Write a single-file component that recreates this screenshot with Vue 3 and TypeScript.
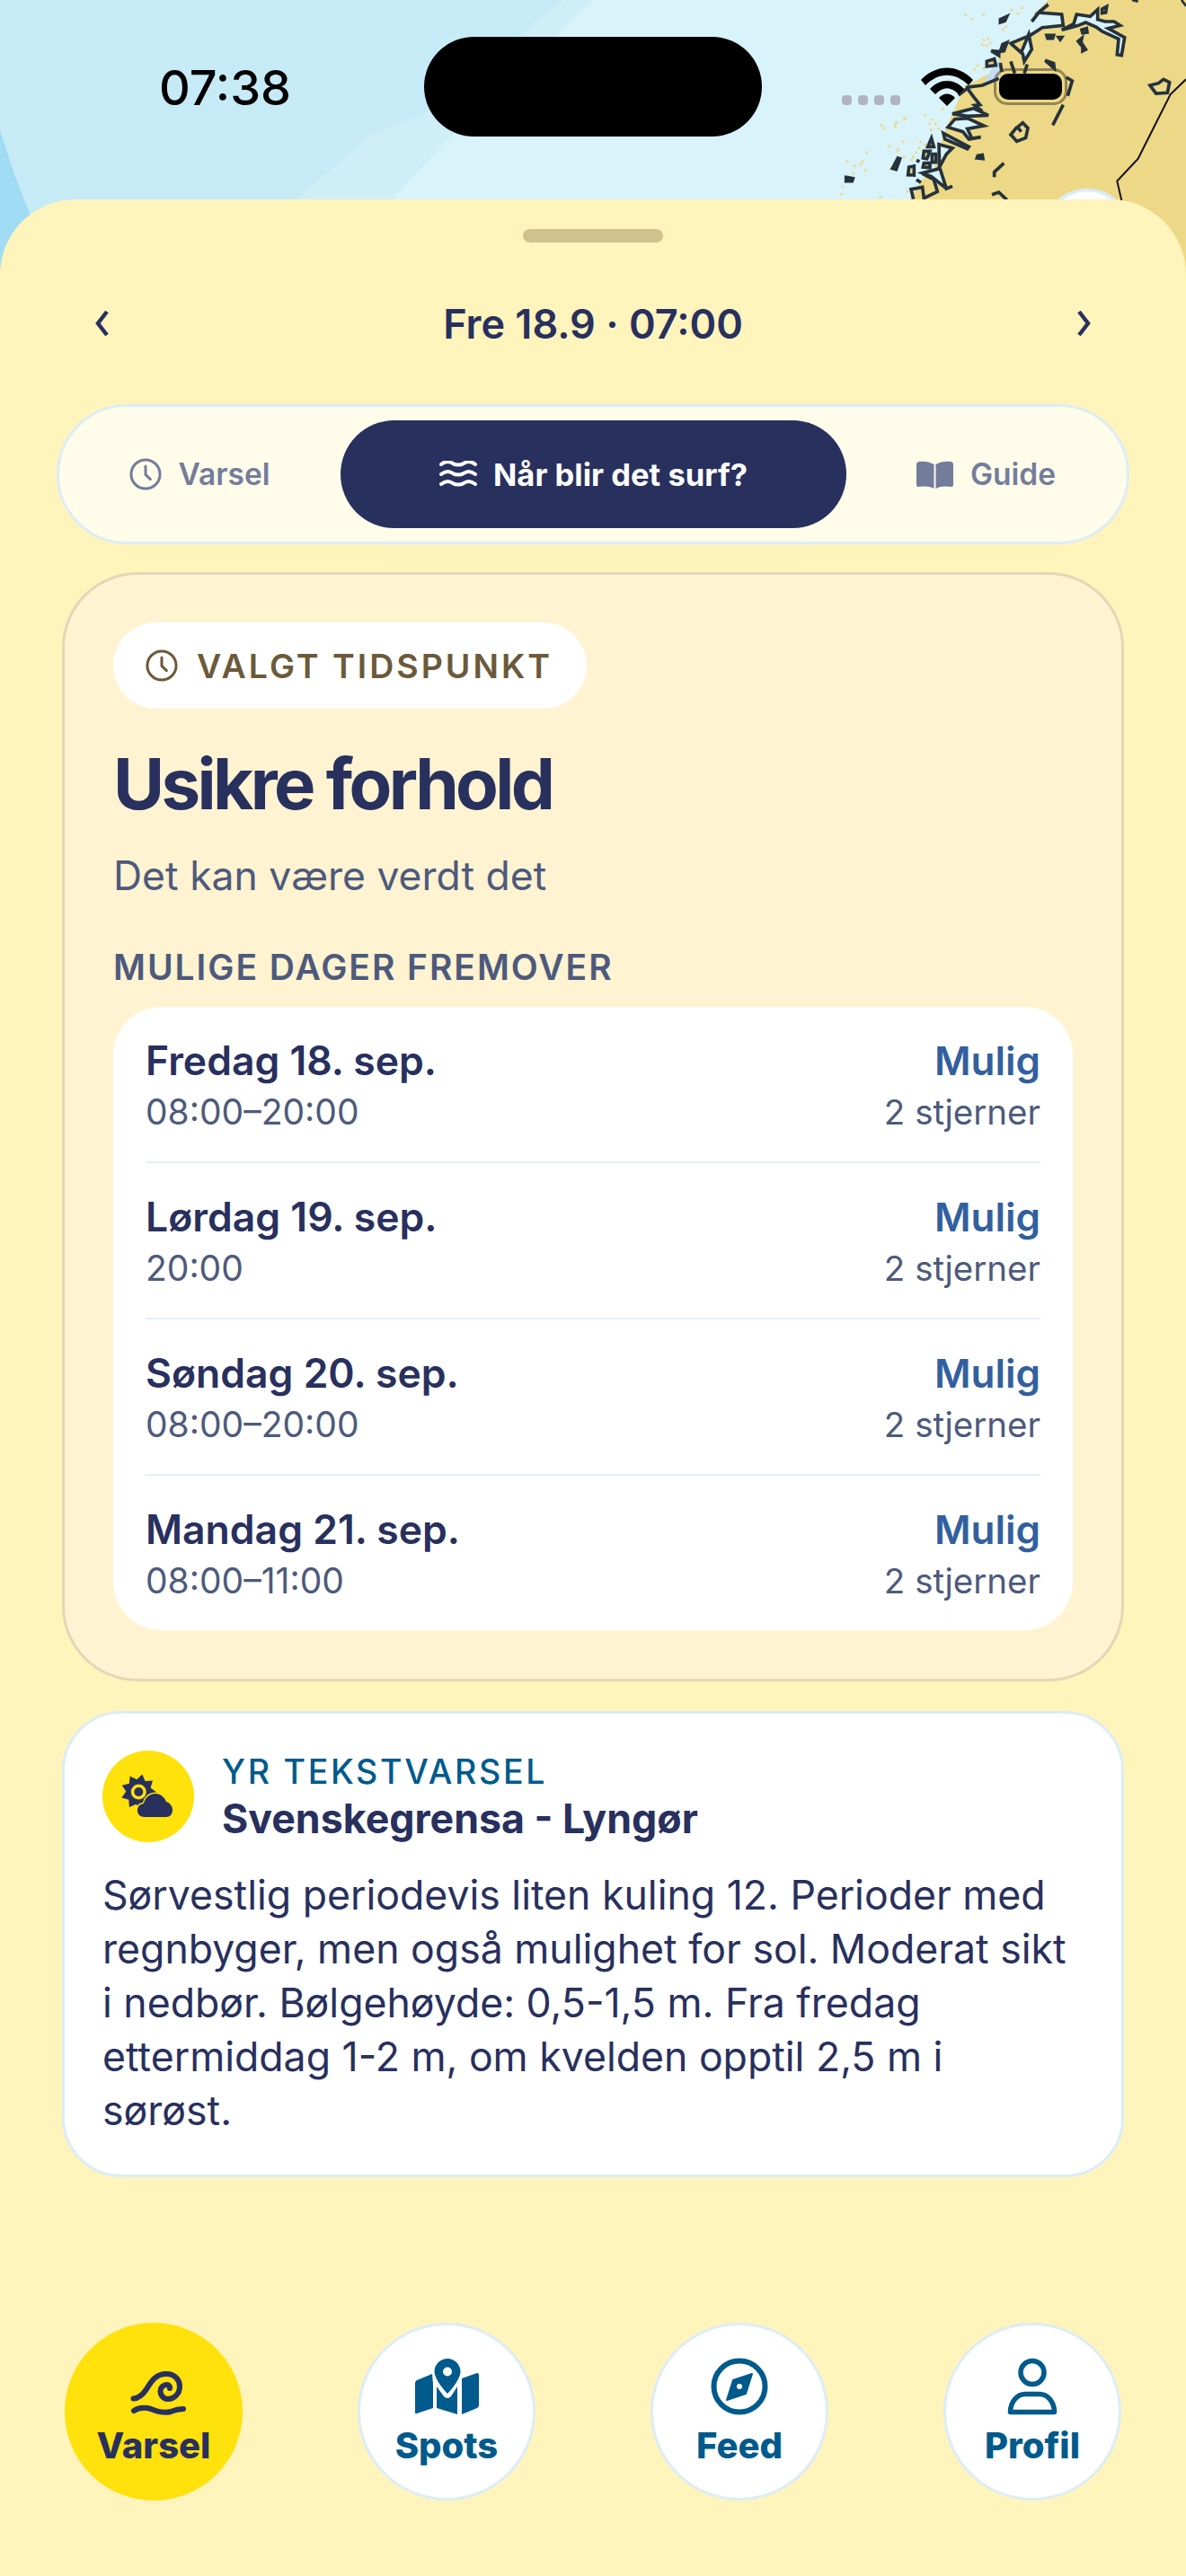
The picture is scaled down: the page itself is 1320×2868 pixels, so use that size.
<script setup lang="ts">
interface DayRow { day: string; hours: string }
const days: DayRow[] = [
  { day: 'Fredag 18. sep.', hours: '08:00–20:00' },
  { day: 'Lørdag 19. sep.', hours: '20:00' },
  { day: 'Søndag 20. sep.', hours: '08:00–20:00' },
  { day: 'Mandag 21. sep.', hours: '08:00–11:00' },
]

const sunPoints = (() => {
  const pts: string[] = []
  for (let i = 0; i < 18; i++) {
    const r = i % 2 === 0 ? 20 : 14
    const a = (i / 18) * Math.PI * 2 - Math.PI / 2 + 0.2
    pts.push(`${(40.3 + r * Math.cos(a)).toFixed(1)},${(46 + r * Math.sin(a)).toFixed(1)}`)
  }
  return pts.join(' ')
})()

const specks: [number, number][] = [
  [640,45],[580,45],[735,30],[755,42],[705,95],[715,85],[640,130],[655,125],[662,140],[650,148],[635,145],
  [620,215],[640,225],[610,228],[600,60],[768,22],[300,415],[310,425],[345,420],[350,405],[375,395],[380,390],
  [445,380],[470,395],[480,410],[465,430],[490,425],[430,470],[445,480],[425,490],[325,485],[355,495],[375,520],
  [400,530],[235,535],[245,565],[210,550],[185,535],[170,620],[165,645],[295,655],[330,560],[405,520],[415,505],
  [385,635],[505,360],[560,340],[250,505],[372,470],[345,410],[460,410],[440,500],[205,575],[230,545],[352,500],
]
</script>

<template>
  <div class="phone">
    <svg class="map" width="1320" height="330" viewBox="0 0 1320 330">
      <rect width="1320" height="330" fill="#c6ebf7" />
      <path d="M0 145 L17 197 L34 240 L60 330 L0 330Z" fill="#a0dcf3" />
      <path d="M627 0 L581 37 L477 125 L413 150 L330 222 L300 330 L1320 330 L1320 0Z" fill="#d0eef8" />
      <path d="M661 0 L627 33 L497 157 L437 222 L400 330 L1320 330 L1320 0Z" fill="#d9f3fb" />
      <svg x="880" y="0" width="440" height="330" viewBox="0 0 1320 990">
        <path d="M860 0 L815 45 L800 75 L770 125 L730 140 L700 150 L690 230 L580 290 L540 380 L510 450 L480 560 L440 600 L400 660 L380 990 L1320 990 L1320 0Z" fill="#ecd886" />
        <g fill="#ecd886"><rect v-for="(s, i) in specks" :key="i" :x="s[0]" :y="s[1]" width="8" height="8" /></g>
        <path d="M640 285 L680 215 L700 200 L695 262Z" fill="#c5dff0" />
        <g fill="#d9f3fb" stroke="#25323b" stroke-width="11" stroke-linejoin="miter">
          <path d="M905 100 L945 80 L955 48 L1000 55 L1025 32 L1025 65 L1050 72 L1080 72 L1100 85 L1060 95 L1115 125 L1105 185 L1090 182 L1095 130 L1040 105 L1020 90 L985 75 L960 85 L935 92Z" />
          <path d="M805 72 L830 40 L860 15 L828 42 L905 48 L910 85 L840 92 L800 118 L770 130 L735 145 L770 175 L795 115 L805 165 L780 205 L775 180 L735 145" />
          <path d="M540 380 L610 362 L660 385 L590 388Z" />
          <path d="M525 425 L548 398 L590 395 L645 420 L590 430 L605 462 L635 458 L595 465 L575 440Z" />
          <path d="M510 445 L595 490 L590 497 L515 465Z" />
          <path d="M560 318 L590 295 L612 325 L632 350 L615 352 L640 372" fill="none" />
          <path d="M495 482 L540 495 L520 515 L497 558 L520 630 L540 622 L520 630 L470 590 L440 578 L490 565 L497 558Z" />
          <path d="M440 580 L478 600 L490 640 L445 662 L440 625 L402 632 L410 665" fill="none" />
          <path d="M585 292 L640 285 L695 262" fill="none" />
        </g>
        <g fill="#ecd886" stroke="#25323b" stroke-width="11" stroke-linejoin="miter">
          <path d="M1200 285 L1228 278 L1245 265 L1265 275 L1258 310 L1220 312Z" />
          <path d="M770 440 L757 425 L775 410 L792 428 L785 460 L755 472 L735 450 L755 425" fill="none" />
          <path d="M470 462 L458 490 L478 490Z" />
          <path d="M445 505 L465 505 L455 530 L442 528Z" />
          <path d="M472 515 L485 515 L485 542 L472 542Z" />
          <path d="M358 528 L340 562 L352 566 L365 530Z" />
          <path d="M395 558 L412 555 L412 585 L392 584Z" />
          <path d="M445 545 L465 545 L465 560 L442 558Z" />
          <path d="M655 205 L680 197 L685 218 L655 222Z" />
          <path d="M700 172 L708 148 L722 142 L712 170Z" />
          <path d="M670 170 L695 172 L695 185Z" />
          <path d="M850 202 L878 212 L880 228Z" />
          <path d="M700 65 L722 55 L715 70 L700 75Z" />
          <path d="M855 118 L878 118 L875 128 L858 128Z" />
          <path d="M1040 30 L1055 22 L1052 42 L1040 44Z" />
          <path d="M185 592 L208 596 L205 605 L185 605Z" />
          <path d="M625 520 L640 518 L642 530 L622 528Z" />
          <path d="M972 128 L960 138 L968 148Z" />
          <path d="M975 150 L985 165 L975 170Z" />
          <path d="M972 100 L988 95 L990 108 L975 110Z" />
          <path d="M895 125 L905 125 L900 132Z" />
        </g>
        <g fill="none" stroke="#25323b" stroke-width="11">
          <path d="M700 210 L705 240" />
          <path d="M735 205 L748 245" />
          <path d="M790 215 L780 245" />
          <path d="M712 545 L680 575 L680 592" />
          <path d="M672 650 L695 642 L722 668" />
          <path d="M875 418 L910 350" />
          <path d="M920 258 L940 270 L925 320" />
          <path d="M420 535 L430 540 M420 600 L435 610" />
        </g>
        <path d="M1320 265 L1268 315 L1160 530 L1090 605 L1105 670 L1110 700" fill="none" stroke="#111" stroke-width="6" />
        <path d="M1140 0 L1160 5 M1305 0 L1320 20" fill="none" stroke="#25323b" stroke-width="8" />
        <ellipse cx="990" cy="720" rx="122" ry="90" fill="#d9edf6" />
        <ellipse cx="990" cy="725" rx="110" ry="85" fill="#fff" />
      </svg>
    </svg>

    <div class="status">
      <span class="clock">07:38</span>
      <div class="island"></div>
      <div class="signal"><i></i><i></i><i></i><i></i></div>
      <svg class="wifi" width="58" height="44" viewBox="0 0 58 44">
        <path d="M0 14 C17 -4 41 -4 58 14 L53 20 C38 5 20 5 5 20Z" />
        <path d="M10 24 C21 12 37 12 48 24 L42 30 C33 21 25 21 16 30Z" />
        <path d="M20 34 C25 28 33 28 38 34 L29 43Z" />
      </svg>
      <div class="battery"><div class="battery-fill"></div></div>
    </div>

    <main class="sheet">
      <div class="handle"></div>

      <nav class="date-nav">
        <svg width="24" height="36" viewBox="0 0 24 36"><path d="M17 5 L7 18 L17 31" /></svg>
        <span class="date-label">Fre 18.9 · 07:00</span>
        <svg width="24" height="36" viewBox="0 0 24 36"><path d="M7 5 L17 18 L7 31" /></svg>
      </nav>

      <div class="tabs">
        <div class="tab tab-varsel">
          <svg width="36" height="36" viewBox="0 0 24 24" class="line-icon"><circle cx="12" cy="12" r="10.700" /><path d="M12 6v6.300l3.600 3.400" /></svg>
          <span>Varsel</span>
        </div>
        <div class="tab tab-active">
          <svg width="42" height="30" viewBox="0 0 42 30" class="waves">
            <path d="M2 4 C7 0 11 0 15 3 C18 5 24 5 27 3 C31 0 35 0 40 4" />
            <path d="M2 15 C7 11 11 11 15 14 C18 16 24 16 27 14 C31 11 35 11 40 15" />
            <path d="M2 26 C7 22 11 22 15 25 C18 27 24 27 27 25 C31 22 35 22 40 26" />
          </svg>
          <span>Når blir det surf?</span>
        </div>
        <div class="tab tab-guide">
          <svg width="41" height="31" viewBox="0 0 41 31" class="book">
            <path d="M19.500 4 C15 1 8 0 2.500 1 Q0 1.500 0 4 L0 27 Q0 29 2 29 C8 28 15 28 19.500 31Z" />
            <path d="M21.500 4 C26 1 33 0 38.500 1 Q41 1.500 41 4 L41 27 Q41 29 39 29 C33 28 26 28 21.500 31Z" />
          </svg>
          <span>Guide</span>
        </div>
      </div>

      <section class="card-main">
        <div class="chip">
          <svg width="36" height="36" viewBox="0 0 24 24" class="line-icon chip-icon"><circle cx="12" cy="12" r="10.700" /><path d="M12 6v6.300l3.600 3.400" /></svg>
          <span>VALGT TIDSPUNKT</span>
        </div>
        <h1>Usikre forhold</h1>
        <p class="sub">Det kan være verdt det</p>
        <h2>MULIGE DAGER FREMOVER</h2>
        <ul class="days">
          <li v-for="d in days" :key="d.day" class="day">
            <div class="col">
              <strong>{{ d.day }}</strong>
              <span>{{ d.hours }}</span>
            </div>
            <div class="col col-right">
              <strong class="mulig">Mulig</strong>
              <span>2 stjerner</span>
            </div>
          </li>
        </ul>
      </section>

      <section class="card-yr">
        <header class="yr-head">
          <div class="yr-icon">
            <svg width="102" height="102" viewBox="0 0 102 102">
              <polygon :points="sunPoints" fill="#28305e" />
              <circle cx="40.300" cy="46" r="8.500" fill="#ffe10c" />
              <circle cx="40.300" cy="46" r="5" fill="#28305e" />
              <path d="M47 74 C42 74 39 71 39 66.500 C39 62 42 59.500 46 59 C47 54 51 48 59 48 C65 48 69 52 71 57 C75 58 78 62 78 66 C78 71 75 74 71 74Z" fill="#28305e" stroke="#ffe10c" stroke-width="3" paint-order="stroke" />
            </svg>
          </div>
          <div class="yr-titles">
            <span class="yr-label">YR TEKSTVARSEL</span>
            <strong class="yr-name">Svenskegrensa - Lyngør</strong>
          </div>
        </header>
        <p class="yr-body">Sørvestlig periodevis liten kuling 12. Perioder med regnbyger, men også mulighet for sol. Moderat sikt i nedbør. Bølgehøyde: 0,5-1,5 m. Fra fredag ettermiddag 1-2 m, om kvelden opptil 2,5 m i sørøst.</p>
      </section>

      <footer class="bottom-nav">
        <div class="nav-btn nav-active">
          <svg width="72" height="66" viewBox="0 0 72 66" class="wave-icon">
            <path d="M13.500 46.500 C20 46 24 42 28 36 C33 28 38 19 50 19 C60 19 65 26 65 33 C65 41 59 47 52 47 C47 47 43.500 43 43.500 38 C43.500 34 47 31 50.500 31 C53 31 54.500 33 54 35" />
            <path d="M14 60 C20 56 26 56 33 58 C42 62 48 63 55 61 C60 59 64 58 69 58" />
          </svg>
          <span>Varsel</span>
        </div>
        <div class="nav-btn">
          <svg width="72" height="66" viewBox="0 0 72 66" class="fill-icon">
            <path fill-rule="evenodd" d="M37 2 C45 2 51.500 8.500 51.500 16.500 C51.500 24 42 36 37 41 C32 36 22.500 24 22.500 16.500 C22.500 8.500 29 2 37 2Z M37 11.500 A5 5 0 1 0 37 21.500 A5 5 0 1 0 37 11.500Z" />
            <path d="M20 19 L3 26 Q1 27 1 29 L1 62 Q1 64 3 63 L21 57 L21 31Z" />
            <path d="M25 33 L33 44 Q37 48 41 44 L48 33 L48 64 L25 57Z" />
            <path d="M53 24 L70 18 Q72 18 72 20 L72 54 Q72 56 70 57 L53 64Z" />
          </svg>
          <span>Spots</span>
        </div>
        <div class="nav-btn">
          <svg width="72" height="66" viewBox="0 0 72 66" class="fill-icon">
            <circle cx="36" cy="33" r="28.500" fill="none" stroke="#005a8c" stroke-width="6" />
            <path fill-rule="evenodd" stroke="#005a8c" stroke-width="2" stroke-linejoin="round" d="M50 19 L43 41 L22 48 L29 26Z M36 29 A4 4 0 1 0 36 37 A4 4 0 1 0 36 29Z" />
          </svg>
          <span>Feed</span>
        </div>
        <div class="nav-btn">
          <svg width="72" height="66" viewBox="0 0 72 66" class="person-icon">
            <circle cx="36" cy="17.500" r="13" />
            <path d="M11.500 61.500 H60.500 C60.500 49 52 41.500 44 41.500 H28 C20 41.500 11.500 49 11.500 61.500Z" />
          </svg>
          <span>Profil</span>
        </div>
      </footer>
    </main>
  </div>
</template>

<style>
html, body { margin: 0; padding: 0; background: #fff4bc; }
</style>

<style scoped>
.phone {
  position: relative;
  width: 1320px;
  height: 2868px;
  overflow: hidden;
  font-family: Inter, "Noto Sans", sans-serif;
  color: #28305e;
}
.map { position: absolute; left: 0; top: 0; }

.status { position: absolute; inset: 0 0 auto 0; height: 200px; z-index: 1; }
.clock {
  position: absolute; left: 177px; top: 66px;
  font-size: 54px; line-height: 64px; font-weight: 500; color: #000;
}
.island { position: absolute; left: 472px; top: 41px; width: 376px; height: 111px; border-radius: 56px; background: #000; }
.signal { position: absolute; left: 937px; top: 106px; display: flex; gap: 7px; }
.signal i { display: block; width: 11px; height: 11px; border-radius: 4px; background: #b0b3c0; }
.wifi { position: absolute; left: 1025px; top: 75px; fill: #000; }
.battery {
  position: absolute; left: 1106px; top: 76px; width: 82px; height: 41px; box-sizing: border-box;
  border: 3px solid rgba(60, 50, 40, 0.5); border-radius: 15px; padding: 3px;
}
.battery-fill { width: 100%; height: 100%; border-radius: 10px; background: #000; }

.sheet {
  position: relative;
  margin-top: 222px;
  height: 2646px;
  box-sizing: border-box;
  background: #fff4bc;
  border-radius: 84px 84px 0 0;
  display: flex;
  flex-direction: column;
  padding-top: 33px;
  z-index: 2;
}
.handle { width: 156px; height: 15px; margin: 0 auto; border-radius: 8px; background: #cfc28f; }

.date-nav {
  margin: 45px 102px 45px;
  height: 90px;
  display: flex;
  align-items: center;
  justify-content: space-between;
}
.date-nav svg path { fill: none; stroke: #28305e; stroke-width: 4.500px; }
.date-label { font-size: 45px; font-weight: 600; }

.tabs {
  margin: 0 63px;
  height: 156px;
  box-sizing: border-box;
  border: 3px solid #dcedf6;
  border-radius: 78px;
  background: #fffcea;
  padding: 15px;
  display: flex;
  align-items: stretch;
}
.tab {
  display: flex;
  align-items: center;
  justify-content: center;
  gap: 19px;
  font-size: 33.500px;
  font-weight: 600;
  color: #747c9b;
}
.tab-varsel { width: 298px; padding-right: 16px; box-sizing: border-box; }
.tab-active {
  width: 563px;
  border-radius: 60px;
  background: #28305e;
  color: #fff;
  font-size: 34.500px;
  font-weight: 700;
  gap: 18px;
}
.tab-guide { flex: 1; padding-left: 14px; }
.line-icon { fill: none; stroke: #747c9b; stroke-width: 2px; stroke-linecap: round; stroke-linejoin: round; }
.chip-icon { stroke: #6b5a3a; }
.waves { fill: none; stroke: #fff; stroke-width: 4px; stroke-linecap: round; }
.book { fill: #747c9b; }

.card-main {
  margin: 31px 69px 0;
  box-sizing: border-box;
  height: 1235px;
  border: 3px solid #e2d8b5;
  border-radius: 84px;
  background: #fff3d1;
  padding: 53px 54px 54px;
}
.chip {
  display: inline-flex;
  align-items: center;
  gap: 21px;
  height: 96px;
  padding: 0 38px 0 36px;
  border-radius: 48px;
  background: #fff;
  color: #6b5a3a;
  font-size: 37.500px;
  font-weight: 600;
  letter-spacing: 3px;
  vertical-align: top;
}
h1 {
  margin: 36px 0 0;
  font-size: 78px;
  line-height: 96px;
  font-weight: 700;
  letter-spacing: -3.600px;
  color: #28305e;
}
.sub { margin: 24px 0 0; font-size: 44.500px; line-height: 60px; color: #4d5a7c; }
h2 {
  margin: 48px 0 0;
  font-size: 39px;
  line-height: 48px;
  font-weight: 600;
  letter-spacing: 1.950px;
  color: #4d5a7c;
}
.days {
  list-style: none;
  margin: 20px 0 0;
  padding: 0;
  height: 694px;
  background: #fff;
  border-radius: 54px;
}
.day {
  height: 174px;
  box-sizing: border-box;
  margin: 0 36px;
  padding-top: 30px;
  border-bottom: 2px solid #e3f0f8;
  display: flex;
  justify-content: space-between;
}
.day:last-child { border-bottom: 0; height: 172px; }
.col { display: flex; flex-direction: column; }
.col strong { font-size: 44.500px; line-height: 60px; font-weight: 600; }
.col span { font-size: 39px; line-height: 54px; color: #4d5a7c; }
.col-right { align-items: flex-end; }
.col-right span { font-size: 38.500px; }
.col-right .mulig { color: #32609e; font-size: 44px; }

.card-yr {
  margin: 33px 69px 0;
  box-sizing: border-box;
  height: 519px;
  border: 3px solid #dcedf6;
  border-radius: 66px;
  background: #fff;
  padding: 41px 42px;
}
.yr-head { display: flex; align-items: center; gap: 31px; height: 102px; }
.yr-icon { width: 102px; height: 102px; border-radius: 50%; background: #ffe10c; flex: none; }
.yr-icon svg { display: block; }
.yr-titles { display: flex; flex-direction: column; }
.yr-label { font-size: 37.500px; line-height: 50px; font-weight: 500; letter-spacing: 2.700px; color: #005a8c; }
.yr-name { font-size: 44.700px; line-height: 54px; font-weight: 700; }
.yr-body { margin: 29px 0 0; padding-right: 12px; font-size: 44.600px; line-height: 60px; }

.bottom-nav {
  margin-top: auto;
  padding: 0 72px 84px;
  display: flex;
  justify-content: space-between;
}
.nav-btn {
  width: 198px;
  height: 198px;
  box-sizing: border-box;
  border: 3px solid #dcedf6;
  border-radius: 50%;
  background: #fff;
  display: flex;
  flex-direction: column;
  align-items: center;
  padding-top: 35px;
  color: #005a8c;
  font-size: 40px;
  line-height: 50px;
  font-weight: 800;
}
.nav-btn svg { display: block; margin-bottom: 8px; flex: none; }
.nav-active { background: #ffe10c; border-color: #ffe10c; color: #28305e; }
.fill-icon { fill: #005a8c; }
.person-icon { fill: none; stroke: #005a8c; stroke-width: 5.500px; stroke-linejoin: round; }
.wave-icon { fill: none; stroke: #28305e; stroke-width: 6px; stroke-linecap: round; }
</style>
